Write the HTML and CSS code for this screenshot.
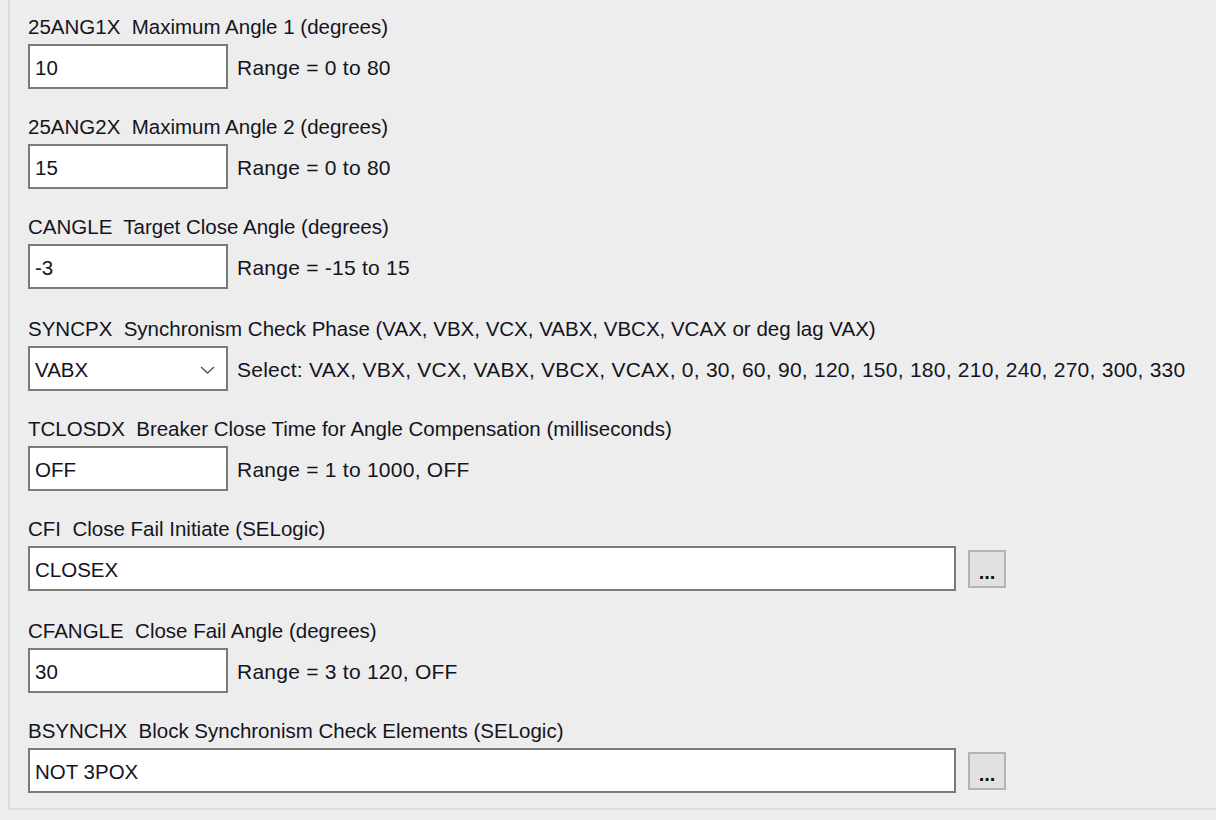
FILE: index.html
```html
<!DOCTYPE html>
<html>
<head>
<meta charset="utf-8">
<link rel="stylesheet" href="styles.css">
</head>
<body>
<div class="panel">
  <div class="field">
    <div class="label">25ANG1X&nbsp; Maximum Angle 1 (degrees)</div>
    <div class="row"><div class="input short">10</div><span class="hint">Range = 0 to 80</span></div>
  </div>
  <div class="field">
    <div class="label">25ANG2X&nbsp; Maximum Angle 2 (degrees)</div>
    <div class="row"><div class="input short">15</div><span class="hint">Range = 0 to 80</span></div>
  </div>
  <div class="field tall">
    <div class="label">CANGLE&nbsp; Target Close Angle (degrees)</div>
    <div class="row"><div class="input short">-3</div><span class="hint">Range = -15 to 15</span></div>
  </div>
  <div class="field">
    <div class="label">SYNCPX&nbsp; Synchronism Check Phase (VAX, VBX, VCX, VABX, VBCX, VCAX or deg lag VAX)</div>
    <div class="row"><div class="input short select"><span>VABX</span><svg class="chev" width="15" height="8" viewBox="0 0 15 8"><polyline points="1,1 7.5,7 14,1" fill="none" stroke="#555" stroke-width="1.4"/></svg></div><span class="hint">Select: VAX, VBX, VCX, VABX, VBCX, VCAX, 0, 30, 60, 90, 120, 150, 180, 210, 240, 270, 300, 330</span></div>
  </div>
  <div class="field">
    <div class="label">TCLOSDX&nbsp; Breaker Close Time for Angle Compensation (milliseconds)</div>
    <div class="row"><div class="input short">OFF</div><span class="hint">Range = 1 to 1000, OFF</span></div>
  </div>
  <div class="field tall">
    <div class="label">CFI&nbsp; Close Fail Initiate (SELogic)</div>
    <div class="row"><div class="input wide">CLOSEX</div><div class="btn">...</div></div>
  </div>
  <div class="field">
    <div class="label">CFANGLE&nbsp; Close Fail Angle (degrees)</div>
    <div class="row"><div class="input short">30</div><span class="hint">Range = 3 to 120, OFF</span></div>
  </div>
  <div class="field">
    <div class="label">BSYNCHX&nbsp; Block Synchronism Check Elements (SELogic)</div>
    <div class="row"><div class="input wide">NOT 3POX</div><div class="btn">...</div></div>
  </div>
</div>
</body>
</html>
```

FILE: styles.css
```css
html, body {
  margin: 0;
  padding: 0;
  background: #ededed;
  height: 820px;
  overflow: hidden;
}
body {
  font-family: "Liberation Sans", Arial, sans-serif;
  font-size: 20.5px;
  color: #14141e;
}
.panel {
  margin-left: 8px;
  width: 1220px;
  height: 810px;
  box-sizing: border-box;
  border-left: 2px solid #dcdcdc;
  border-bottom: 2px solid #dcdcdc;
  padding: 14px 0 0 18px;
}
.field {
  height: 100px;
}
.field.tall {
  height: 102px;
}
.label {
  height: 25px;
  line-height: 25px;
  white-space: nowrap;
  margin-bottom: 5px;
}
.row {
  display: flex;
  align-items: center;
  height: 45px;
}
.input {
  box-sizing: border-box;
  height: 45px;
  background: #fff;
  border: 2px solid #7a7a7a;
  padding: 3px 0 0 5px;
  display: flex;
  align-items: center;
  white-space: nowrap;
}
.input.short {
  width: 200px;
}
.input.wide {
  width: 928px;
}
.input.select {
  justify-content: space-between;
  padding-right: 11px;
}
.chev {
  display: block;
}
.hint {
  margin-left: 9px;
  padding-top: 3px;
  white-space: nowrap;
  font-size: 21px;
  letter-spacing: 0.25px;
}
.btn {
  margin-left: 12px;
  width: 38px;
  height: 38px;
  box-sizing: border-box;
  background: #e1e1e1;
  border: 2px solid #b4b4b4;
  display: flex;
  align-items: flex-end;
  justify-content: center;
  font-weight: bold;
  font-size: 20px;
  line-height: 20px;
  padding-bottom: 4px;
  color: #111;
}
```
